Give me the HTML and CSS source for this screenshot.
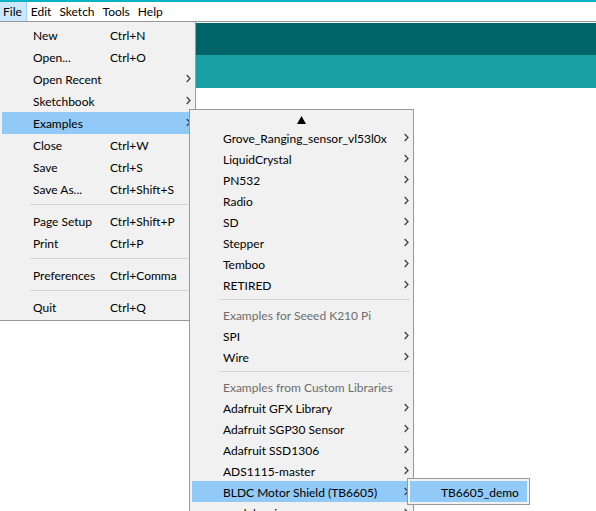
FILE: index.html
```html
<!DOCTYPE html>
<html lang="en">
<head>
<meta charset="utf-8">
<title>Sketch editor</title>
<link rel="stylesheet" href="styles.css">
</head>
<body>
<svg class="symbols" aria-hidden="true"><symbol id="chevron" viewBox="0 0 5 9"><path d="M.7 1 4 4.5.7 8" fill="none" stroke="#444" stroke-width="1.3"/></symbol></svg>
<nav class="menubar">
  <div class="entry">
    <button class="top open" aria-expanded="true">File</button>
    <ul class="menu file-menu">
      <li><button class="item"><span>New</span><kbd>Ctrl+N</kbd></button></li>
      <li><button class="item"><span>Open...</span><kbd>Ctrl+O</kbd></button></li>
      <li><button class="item">Open Recent<svg class="more"><use href="#chevron"/></svg></button></li>
      <li><button class="item">Sketchbook<svg class="more"><use href="#chevron"/></svg></button></li>
      <li class="parent"><button class="item active" aria-expanded="true">Examples<svg class="more"><use href="#chevron"/></svg></button>
        <ul class="menu examples-menu">
          <li><button class="scroll-up" aria-label="Scroll up"><svg viewBox="0 0 9 8"><path d="M4.5 0 9 8H0z"/></svg></button></li>
          <li><button class="item">Grove_Ranging_sensor_vl53l0x<svg class="more"><use href="#chevron"/></svg></button></li>
          <li><button class="item">LiquidCrystal<svg class="more"><use href="#chevron"/></svg></button></li>
          <li><button class="item">PN532<svg class="more"><use href="#chevron"/></svg></button></li>
          <li><button class="item">Radio<svg class="more"><use href="#chevron"/></svg></button></li>
          <li><button class="item">SD<svg class="more"><use href="#chevron"/></svg></button></li>
          <li><button class="item">Stepper<svg class="more"><use href="#chevron"/></svg></button></li>
          <li><button class="item">Temboo<svg class="more"><use href="#chevron"/></svg></button></li>
          <li><button class="item">RETIRED<svg class="more"><use href="#chevron"/></svg></button></li>
          <li class="separator"></li>
          <li><button class="item" disabled>Examples for Seeed K210 Pi</button></li>
          <li><button class="item">SPI<svg class="more"><use href="#chevron"/></svg></button></li>
          <li><button class="item">Wire<svg class="more"><use href="#chevron"/></svg></button></li>
          <li class="separator"></li>
          <li><button class="item" disabled>Examples from Custom Libraries</button></li>
          <li><button class="item">Adafruit GFX Library<svg class="more"><use href="#chevron"/></svg></button></li>
          <li><button class="item">Adafruit SGP30 Sensor<svg class="more"><use href="#chevron"/></svg></button></li>
          <li><button class="item">Adafruit SSD1306<svg class="more"><use href="#chevron"/></svg></button></li>
          <li><button class="item">ADS1115-master<svg class="more"><use href="#chevron"/></svg></button></li>
          <li class="parent"><button class="item active" aria-expanded="true">BLDC Motor Shield (TB6605)<svg class="more"><use href="#chevron"/></svg></button>
            <ul class="menu demo-menu">
              <li><button class="item active">TB6605_demo</button></li>
            </ul>
          </li>
          <li><button class="item">modulensis<svg class="more"><use href="#chevron"/></svg></button></li>
        </ul>
      </li>
      <li><button class="item"><span>Close</span><kbd>Ctrl+W</kbd></button></li>
      <li><button class="item"><span>Save</span><kbd>Ctrl+S</kbd></button></li>
      <li><button class="item"><span>Save As...</span><kbd>Ctrl+Shift+S</kbd></button></li>
      <li class="separator"></li>
      <li><button class="item"><span>Page Setup</span><kbd>Ctrl+Shift+P</kbd></button></li>
      <li><button class="item"><span>Print</span><kbd>Ctrl+P</kbd></button></li>
      <li class="separator"></li>
      <li><button class="item"><span>Preferences</span><kbd>Ctrl+Comma</kbd></button></li>
      <li class="separator"></li>
      <li><button class="item"><span>Quit</span><kbd>Ctrl+Q</kbd></button></li>
    </ul>
  </div>
  <button class="top">Edit</button>
  <button class="top">Sketch</button>
  <button class="top">Tools</button>
  <button class="top">Help</button>
</nav>
<div class="toolbar"></div>
<div class="tabs"></div>
</body>
</html>
```
FILE: styles.css
```css
* { box-sizing: border-box; }

html, body { height: 100%; }

body {
  margin: 0;
  overflow: hidden;
  background: #fff;
  border-top: 2px solid #08b3c3;
  font: 12px/16px Lato, "Open Sans", sans-serif;
  color: #000;
}

button {
  margin: 0;
  padding: 0;
  border: 0;
  background: none;
  color: inherit;
  font: inherit;
  text-align: left;
}

kbd { font: inherit; }

.symbols { position: absolute; width: 0; height: 0; }

.menubar {
  display: flex;
  height: 21px;
  padding-bottom: 1px;
  background: linear-gradient(#999, #999) 0 19px / 100% 1px no-repeat #fff;
}

.entry { position: relative; }

.top {
  display: block;
  height: 19px;
  padding: 0 4px;
}

.top.open {
  padding: 0 4px 0 3px;
  background: #cce8ff;
  border-right: 1px solid #99d1ff;
}

.toolbar { height: 32px; background: #006468; }
.tabs { height: 33px; background: #17a1a5; }

.menu {
  position: absolute;
  margin: 0;
  padding: 2px;
  list-style: none;
  background: #f1f1f1;
  border: 1px solid #999;
}

.file-menu {
  top: 19px;
  left: -1px;
  width: 197px;
}

.parent { position: relative; }

.item {
  display: grid;
  grid-template-columns: 77px auto;
  align-items: center;
  position: relative;
  width: 100%;
  height: 22px;
  padding-top: 2px;
  padding-left: 31px;
  white-space: nowrap;
}

.item:disabled { color: #6d6d6d; }
.active { background: #91c9f7; }

.more {
  position: absolute;
  right: 2px;
  top: 6px;
  width: 5px;
  height: 9px;
}

.separator {
  height: 1px;
  margin: 4px 0 5px 28px;
  background: #d4d4d4;
}

.examples-menu {
  top: -3px;
  left: 187px;
  width: 225px;
}

.examples-menu .item { height: 21px; }
.examples-menu .separator { margin: 4px 1px 4px 28px; }

.scroll-up {
  display: flex;
  align-items: center;
  justify-content: center;
  width: 100%;
  height: 15px;
}

.scroll-up svg { width: 9px; height: 8px; }

.demo-menu {
  top: -3px;
  left: 215px;
  width: 123px;
}
```
